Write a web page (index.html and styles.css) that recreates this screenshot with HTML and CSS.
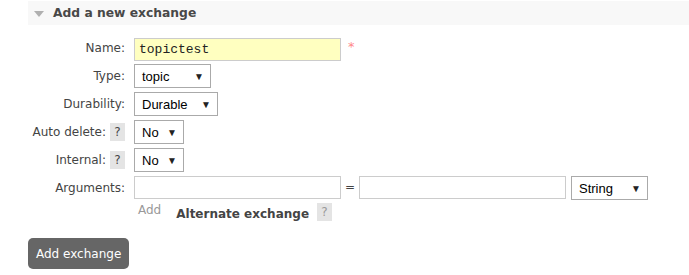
FILE: index.html
```html
<!DOCTYPE html>
<html>
<head>
  <meta charset="UTF-8">
  <title>Add a new exchange</title>
  <link rel="stylesheet" href="styles.css">
</head>
<body>
  <div class="section">
    <h2 class="section-title"><span class="toggle"></span>Add a new exchange</h2>
    <div class="form-grid">
      <label class="field-label">Name:</label>
      <div class="field">
        <input type="text" class="text-input name-input" value="topictest">
        <span class="mand">*</span>
      </div>

      <label class="field-label">Type:</label>
      <div class="field">
        <div class="select type-select"><span>topic</span><span class="arrow">&#9660;</span></div>
      </div>

      <label class="field-label">Durability:</label>
      <div class="field">
        <div class="select durability-select"><span>Durable</span><span class="arrow">&#9660;</span></div>
      </div>

      <label class="field-label">Auto delete: <span class="help">?</span></label>
      <div class="field">
        <div class="select bool-select"><span>No</span><span class="arrow">&#9660;</span></div>
      </div>

      <label class="field-label">Internal: <span class="help">?</span></label>
      <div class="field">
        <div class="select bool-select"><span>No</span><span class="arrow">&#9660;</span></div>
      </div>

      <label class="field-label">Arguments:</label>
      <div class="field">
        <input type="text" class="text-input arg-input">
        <span class="equals">=</span>
        <input type="text" class="text-input arg-input">
        <div class="select string-select"><span>String</span><span class="arrow">&#9660;</span></div>
      </div>

      <div></div>
      <div class="field arg-links">
        <span class="add-link">Add</span>
        <span class="alt-link">Alternate exchange</span>
        <span class="help help-alt">?</span>
      </div>
    </div>
    <button class="submit-button">Add exchange</button>
  </div>
</body>
</html>
```

FILE: styles.css
```css
body {
  margin: 0;
  padding: 1px 0 0 28px;
  font-family: "DejaVu Sans", Verdana, sans-serif;
  font-size: 12px;
  color: #444;
  background-color: white;
}
.section-title {
  margin: 0;
  height: 24px;
  display: flex;
  align-items: center;
  background-color: #f8f8f8;
  font-size: 12.3px;
  font-weight: bold;
  color: #484848;
  padding-left: 6px;
}
.toggle {
  width: 0;
  height: 0;
  border-left: 5px solid transparent;
  border-right: 5px solid transparent;
  border-top: 6px solid #b0b0b0;
  margin-right: 9px;
  margin-top: 1px;
}
.form-grid {
  display: grid;
  grid-template-columns: 98px auto;
  grid-template-rows: repeat(7, 24px);
  row-gap: 4px;
  column-gap: 8px;
  margin-top: 11px;
}
.field-label {
  display: flex;
  justify-content: flex-end;
  align-items: center;
  gap: 4px;
  padding-right: 1px;
  white-space: nowrap;
}
.field {
  display: flex;
  align-items: center;
}
.text-input {
  box-sizing: border-box;
  height: 23px;
  border: 1px solid #ccc;
  padding: 0 4px;
  margin: 0;
  outline: none;
}
.name-input {
  width: 207px;
  background-color: #ffffc0;
  font-family: "Liberation Mono", "Courier New", monospace;
  font-size: 13px;
  color: #222;
  align-self: flex-start;
  margin-top: 2px;
}
.mand {
  color: #f88;
  font-size: 13px;
  margin-left: 7px;
  align-self: flex-start;
  margin-top: 3px;
}
.select {
  box-sizing: border-box;
  height: 24px;
  border: 1px solid #aaa;
  display: flex;
  align-items: center;
  justify-content: space-between;
  padding: 0 6px 0 7px;
  font-family: "Liberation Sans", Arial, sans-serif;
  font-size: 13px;
  color: #000;
  background-color: white;
}
.arrow {
  font-size: 10px;
  color: #222;
}
.type-select {
  width: 77px;
}
.durability-select {
  width: 84px;
}
.bool-select {
  width: 50px;
}
.string-select {
  width: 77px;
  margin-left: 5px;
}
.arg-input {
  width: 207px;
  align-self: flex-start;
}
.equals {
  width: 18px;
  text-align: center;
  align-self: flex-start;
  margin-top: 4px;
}
.help {
  display: inline-block;
  width: 15px;
  height: 18px;
  line-height: 18px;
  text-align: center;
  background-color: #e4e4e4;
  color: #444;
  font-size: 12px;
}
.arg-links {
  align-items: flex-start;
  margin-top: -1px;
}
.add-link {
  color: #999;
  margin-left: 4px;
}
.alt-link {
  font-weight: bold;
  margin-left: 15px;
  margin-top: 4px;
}
.help-alt {
  color: #999;
  margin-left: 8px;
}
.submit-button {
  margin-top: 10px;
  background-color: #666;
  color: white;
  border: none;
  border-radius: 5px;
  height: 31px;
  padding: 0 8px;
  font-family: "DejaVu Sans", Verdana, sans-serif;
  font-size: 12px;
}
```
